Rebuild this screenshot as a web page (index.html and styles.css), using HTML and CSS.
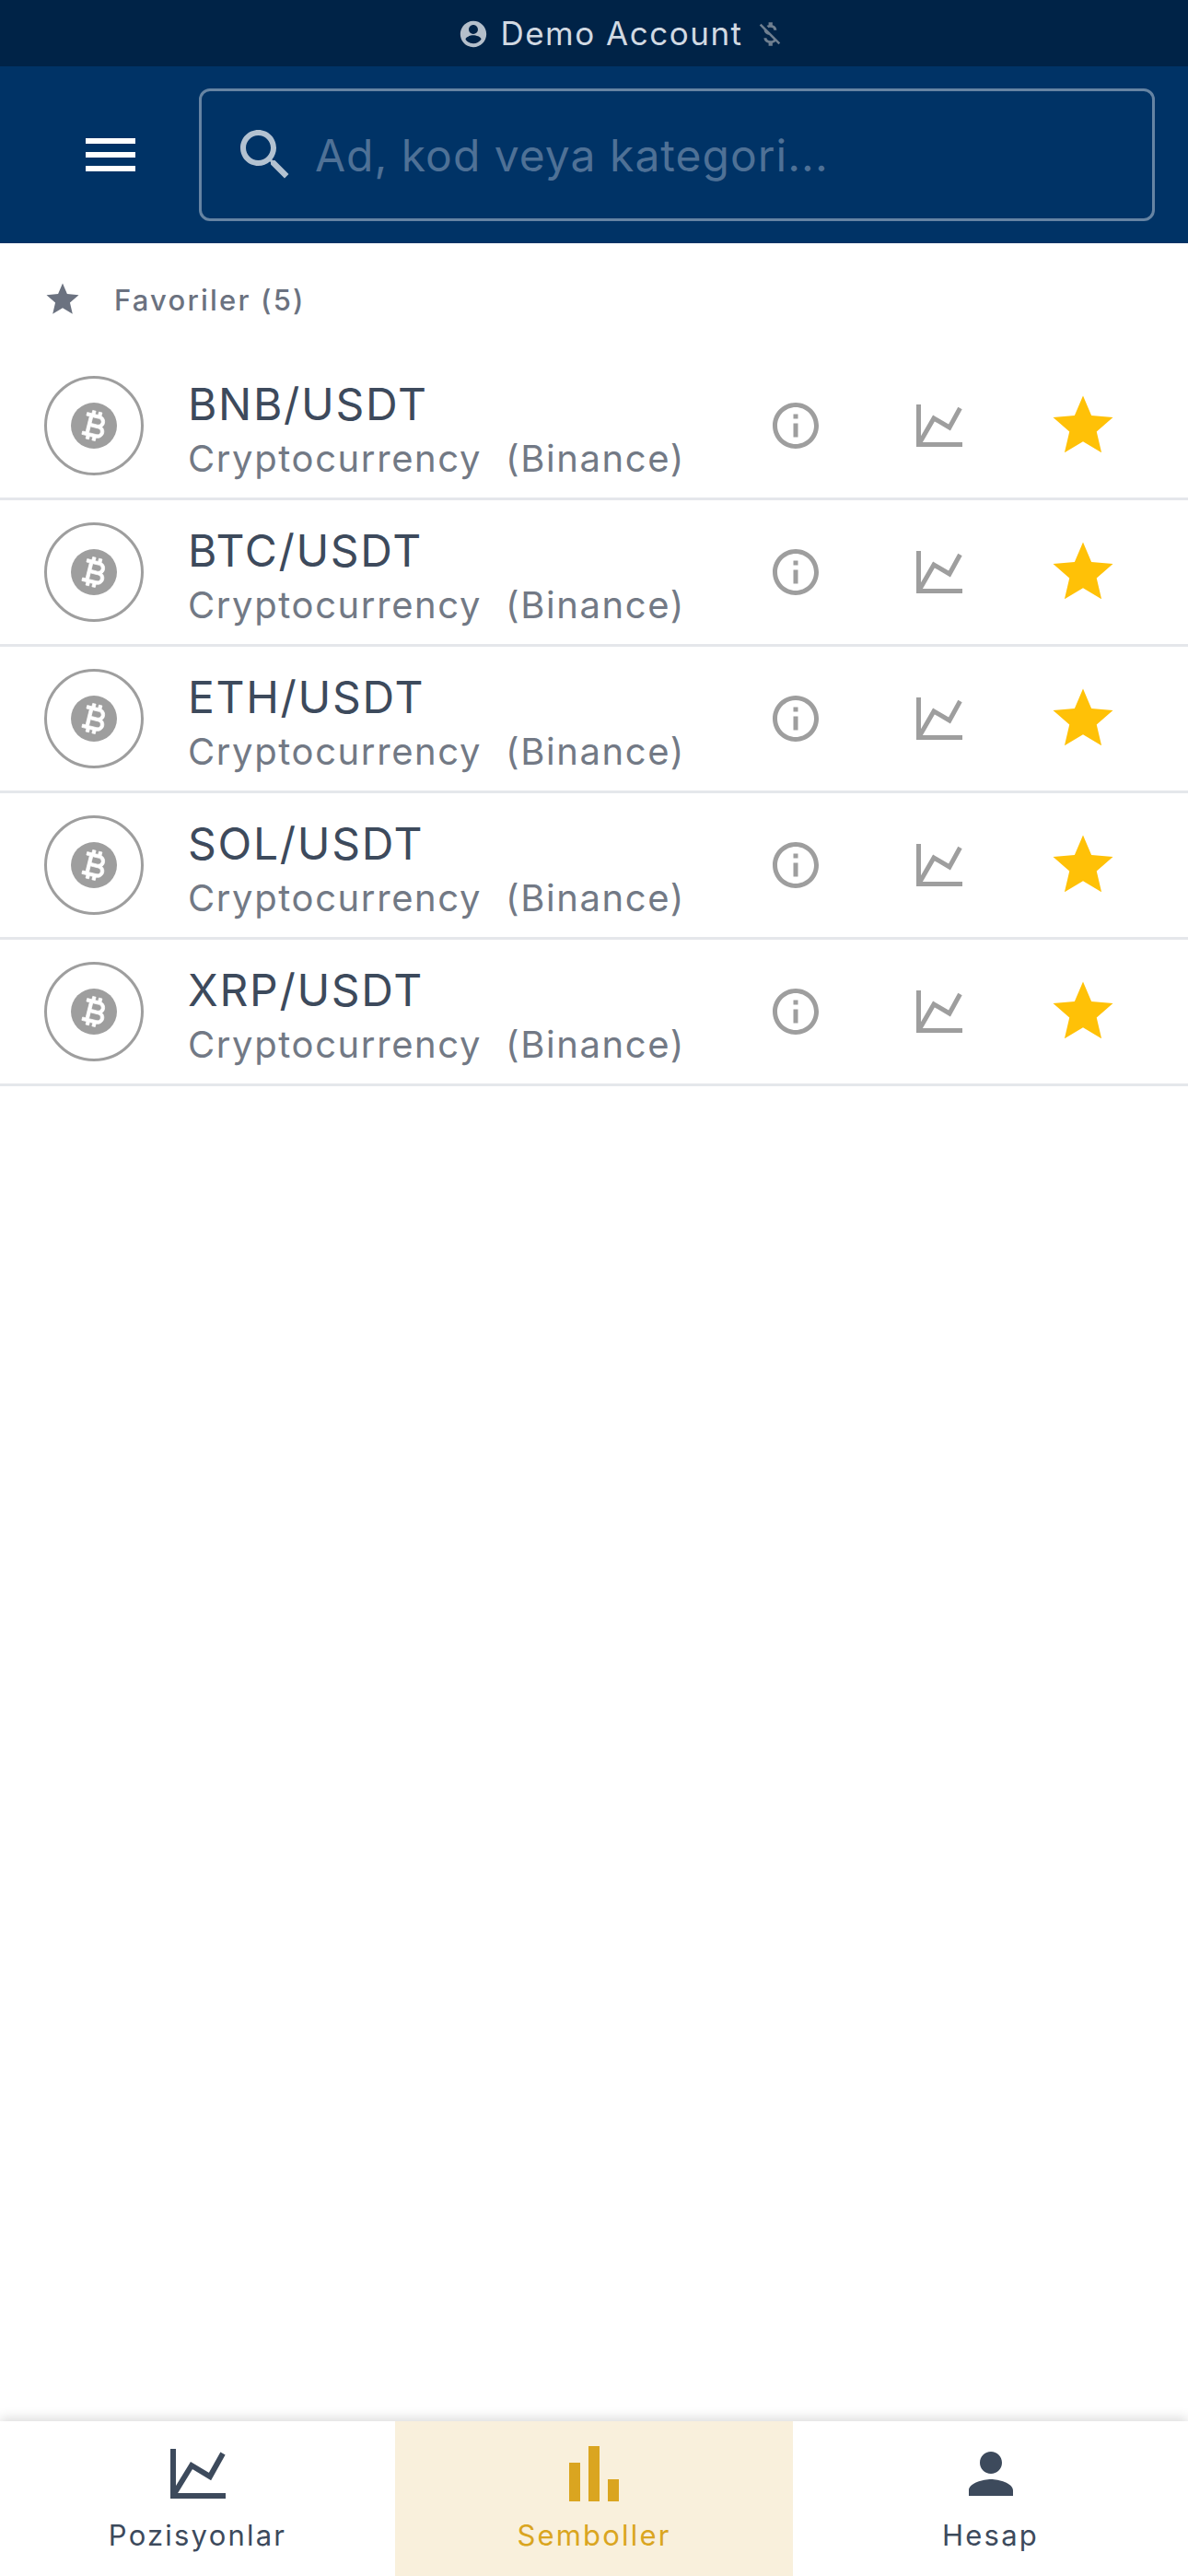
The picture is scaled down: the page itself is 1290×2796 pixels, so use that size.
FILE: index.html
```html
<!DOCTYPE html>
<html lang="en">
<head>
  <meta charset="UTF-8" />
  <title>Semboller</title>
  <meta name="viewport" content="width=device-width, initial-scale=1.0" />
  <link rel="stylesheet" href="styles.css">
</head>
<body>

  <div class="app">
    <div class="status-bar">
      <svg class="status-user" viewBox="0 0 24 24"><path d="M12 2C6.48 2 2 6.48 2 12s4.48 10 10 10 10-4.48 10-10S17.52 2 12 2zm0 3c1.93 0 3.5 1.57 3.5 3.5S13.93 12 12 12s-3.5-1.57-3.5-3.5S10.07 5 12 5zm0 14.2c-2.5 0-4.71-1.28-6-3.22.03-1.99 4-3.08 6-3.08 1.99 0 5.97 1.09 6 3.08-1.29 1.94-3.5 3.22-6 3.22z"/></svg>
      <span>Demo Account</span>
      <svg class="status-off" viewBox="0 0 24 24"><path d="M12.5 6.9c1.78 0 2.44.85 2.5 2.1h2.21c-.07-1.72-1.12-3.3-3.21-3.81V3h-3v2.16c-.53.12-1.03.3-1.48.54l1.47 1.47c.41-.17.91-.27 1.51-.27zM5.33 4.06L4.06 5.33 7.5 8.77c0 2.08 1.56 3.22 3.91 3.91l3.51 3.51c-.34.48-1.05.91-2.42.91-2.06 0-2.87-.92-2.98-2.1h-2.2c.12 2.19 1.76 3.42 3.68 3.83V21h3v-2.15c.96-.18 1.82-.55 2.45-1.12l2.22 2.22 1.27-1.27L5.33 4.06z"/></svg>
    </div>

    <header class="top-bar">
      <svg class="menu-icon" viewBox="0 0 24 24"><path d="M3 18h18v-2H3v2zm0-5h18v-2H3v2zm0-7v2h18V6H3z"/></svg>
      <div class="search">
        <svg class="search-icon" viewBox="0 0 24 24"><path d="M15.5 14h-.79l-.28-.27C15.41 12.59 16 11.11 16 9.5 16 5.91 13.09 3 9.5 3S3 5.91 3 9.5 5.91 16 9.5 16c1.61 0 3.09-.59 4.23-1.57l.27.28v.79l5 4.99L20.49 19l-4.99-5zm-6 0C7.01 14 5 11.99 5 9.5S7.01 5 9.5 5 14 7.01 14 9.5 11.99 14 9.5 14z"/></svg>
        <input type="text" placeholder="Ad, kod veya kategori..." />
      </div>
    </header>

    <div class="section-title">
      <svg class="section-star" viewBox="0 0 24 24"><path d="M12 17.27 18.18 21l-1.64-7.03L22 9.24l-7.19-.61L12 2 9.19 8.63 2 9.24l5.46 4.73L5.82 21z"/></svg>
      <span>Favoriler (5)</span>
    </div>

    <div class="symbols" id="symbols"></div>

    <nav class="bottom-nav">
      <div class="nav-item">
        <svg class="nav-chart" viewBox="0 0 60 54"><path d="M3 0v51h57M4 49 23 18l20 12L57 5" fill="none" stroke="currentColor" stroke-width="6"/></svg>
        <span>Pozisyonlar</span>
      </div>
      <div class="nav-item active">
        <svg class="nav-bars" viewBox="0 0 54 60"><rect x="0" y="18" width="12" height="42"/><rect x="21" y="0" width="12" height="60"/><rect x="42" y="36" width="12" height="24"/></svg>
        <span>Semboller</span>
      </div>
      <div class="nav-item">
        <svg class="nav-person" viewBox="0 0 24 24"><path d="M12 12c2.21 0 4-1.79 4-4s-1.79-4-4-4-4 1.79-4 4 1.79 4 4 4zm0 2c-2.67 0-8 1.34-8 4v2h16v-2c0-2.66-5.33-4-8-4z"/></svg>
        <span>Hesap</span>
      </div>
    </nav>
  </div>

  <script>
    const symbols = ['BNB/USDT', 'BTC/USDT', 'ETH/USDT', 'SOL/USDT', 'XRP/USDT'];
    const list = document.getElementById('symbols');

    symbols.forEach(name => {
      const row = document.createElement('div');
      row.className = 'symbol-row';
      row.innerHTML = `
        <div class="coin">
          <div class="coin-disc">
            <svg viewBox="0 0 24 24"><path d="M17.06 11.57c.59-.69.94-1.59.94-2.57 0-1.86-1.27-3.43-3-3.87V3h-2v2h-2V3H9v2H6v2h2v10H6v2h3v2h2v-2h2v2h2v-2c2.21 0 4-1.79 4-4 0-1.45-.78-2.73-1.94-3.43zM10 7h4c1.1 0 2 .9 2 2s-.9 2-2 2h-4V7zm5 10h-5v-4h5c1.1 0 2 .9 2 2s-.9 2-2 2z"/></svg>
          </div>
        </div>
        <div class="symbol-text">
          <div class="symbol-name">${name}</div>
          <div class="symbol-sub"><span>Cryptocurrency</span><span>(Binance)</span></div>
        </div>
        <div class="action">
          <svg class="icon-info" viewBox="0 0 24 24"><path d="M11 7h2v2h-2zm0 4h2v6h-2zm1-9C6.48 2 2 6.48 2 12s4.48 10 10 10 10-4.48 10-10S17.52 2 12 2zm0 18c-4.41 0-8-3.59-8-8s3.59-8 8-8 8 3.59 8 8-3.59 8-8 8z"/></svg>
        </div>
        <div class="action">
          <svg class="icon-chart" viewBox="0 0 50 46"><path d="M2.5 0v43.5H50M4 41 19 15l17 10L47.5 4" fill="none" stroke="currentColor" stroke-width="5"/></svg>
        </div>
        <div class="action">
          <svg class="icon-star" viewBox="0 0 24 24"><path d="M12 17.27 18.18 21l-1.64-7.03L22 9.24l-7.19-.61L12 2 9.19 8.63 2 9.24l5.46 4.73L5.82 21z"/></svg>
        </div>`;
      list.appendChild(row);
    });
  </script>

</body>
</html>
```

FILE: styles.css
```css
:root {
  --navy: #003366;
  --navy-dark: #002347;
  --text-dark: #3d4a5c;
  --text-muted: #727985;
  --gold: #daa520;
  --icon-grey: #9e9e9e;
}

* {
  box-sizing: border-box;
}

body {
  margin: 0;
  font-family: Inter, 'Noto Sans', sans-serif;
  background: #fff;
}

svg {
  display: block;
  fill: currentColor;
  flex-shrink: 0;
}

.app {
  display: flex;
  flex-direction: column;
  min-height: 100vh;
}

.status-bar {
  height: 72px;
  background: var(--navy-dark);
  color: #d1d9e2;
  display: flex;
  align-items: center;
  justify-content: center;
  gap: 12px;
  padding-left: 60px;
  font-size: 35px;
  letter-spacing: 1.5px;
}

.status-user {
  width: 34px;
  height: 34px;
  color: #b4bfcb;
  margin-top: 2px;
}

.status-off {
  width: 34px;
  height: 34px;
  color: #6f7f90;
  margin-top: 2px;
}

.top-bar {
  height: 192px;
  background: var(--navy);
  display: flex;
  align-items: center;
  padding: 0 36px 0 84px;
  gap: 60px;
}

.menu-icon {
  width: 72px;
  height: 72px;
  color: #fff;
}

.search {
  flex: 1;
  height: 144px;
  border: 3px solid rgba(255, 255, 255, 0.4);
  border-radius: 12px;
  display: flex;
  align-items: center;
  padding-left: 33px;
  gap: 18px;
}

.search-icon {
  width: 72px;
  height: 72px;
  color: #b3c2d1;
}

.search input {
  flex: 1;
  min-width: 0;
  background: transparent;
  border: none;
  outline: none;
  padding: 0;
  font-family: inherit;
  font-size: 48px;
  letter-spacing: 1px;
}

.search input::placeholder {
  color: #4f7196;
  opacity: 1;
}

.section-title {
  height: 120px;
  display: flex;
  align-items: center;
  padding: 2px 0 0 47px;
  gap: 35px;
  color: #6b7280;
  font-size: 31px;
  font-weight: 500;
  letter-spacing: 2.2px;
}

.section-star {
  width: 42px;
  height: 42px;
}

.symbols {
  flex: 1;
}

.symbol-row {
  height: 159px;
  border-bottom: 3px solid #e5e7eb;
  display: flex;
  align-items: center;
  padding: 0 36px 0 48px;
}

.coin {
  width: 108px;
  height: 108px;
  border: 3px solid var(--icon-grey);
  border-radius: 50%;
  display: flex;
  align-items: center;
  justify-content: center;
  margin-right: 48px;
}

.coin-disc {
  width: 50px;
  height: 50px;
  border-radius: 50%;
  background: var(--icon-grey);
  display: flex;
  align-items: center;
  justify-content: center;
}

.coin-disc svg {
  width: 42px;
  height: 42px;
  color: #fff;
  stroke: #fff;
  stroke-width: 0.4;
  transform: rotate(14deg);
}

.symbol-text {
  flex: 1;
  min-width: 0;
  padding-top: 9px;
}

.symbol-name {
  color: var(--text-dark);
  font-size: 48px;
  line-height: 58px;
  letter-spacing: 1.7px;
  margin-bottom: 5px;
}

.symbol-sub {
  display: flex;
  gap: 26px;
  color: var(--text-muted);
  font-size: 40px;
  line-height: 50px;
  letter-spacing: 1.6px;
}

.action {
  width: 156px;
  display: flex;
  justify-content: center;
  color: var(--icon-grey);
}

.icon-info {
  width: 60px;
  height: 60px;
}

.icon-chart {
  width: 50px;
  height: 46px;
}

.icon-star {
  width: 78px;
  height: 78px;
  color: #ffc107;
}

.bottom-nav {
  height: 168px;
  background: #fff;
  display: flex;
  box-shadow: 0 -3px 12px rgba(0, 0, 0, 0.15);
}

.nav-item {
  flex: 1;
  height: 100%;
  display: flex;
  flex-direction: column;
  align-items: center;
  color: var(--text-dark);
  font-size: 31px;
  letter-spacing: 2.2px;
  padding-top: 27px;
}

.nav-item svg {
  height: 60px;
}

.nav-item span {
  margin-top: 18px;
}

.nav-item.active {
  flex: 0 0 432px;
  background: #f9f0dc;
  color: var(--gold);
}

.nav-chart {
  width: 60px;
}

.nav-bars {
  width: 54px;
}

.nav-person {
  width: 72px;
}

.nav-item svg.nav-person {
  height: 72px;
  margin: -6px 0 -6px;
}
```
